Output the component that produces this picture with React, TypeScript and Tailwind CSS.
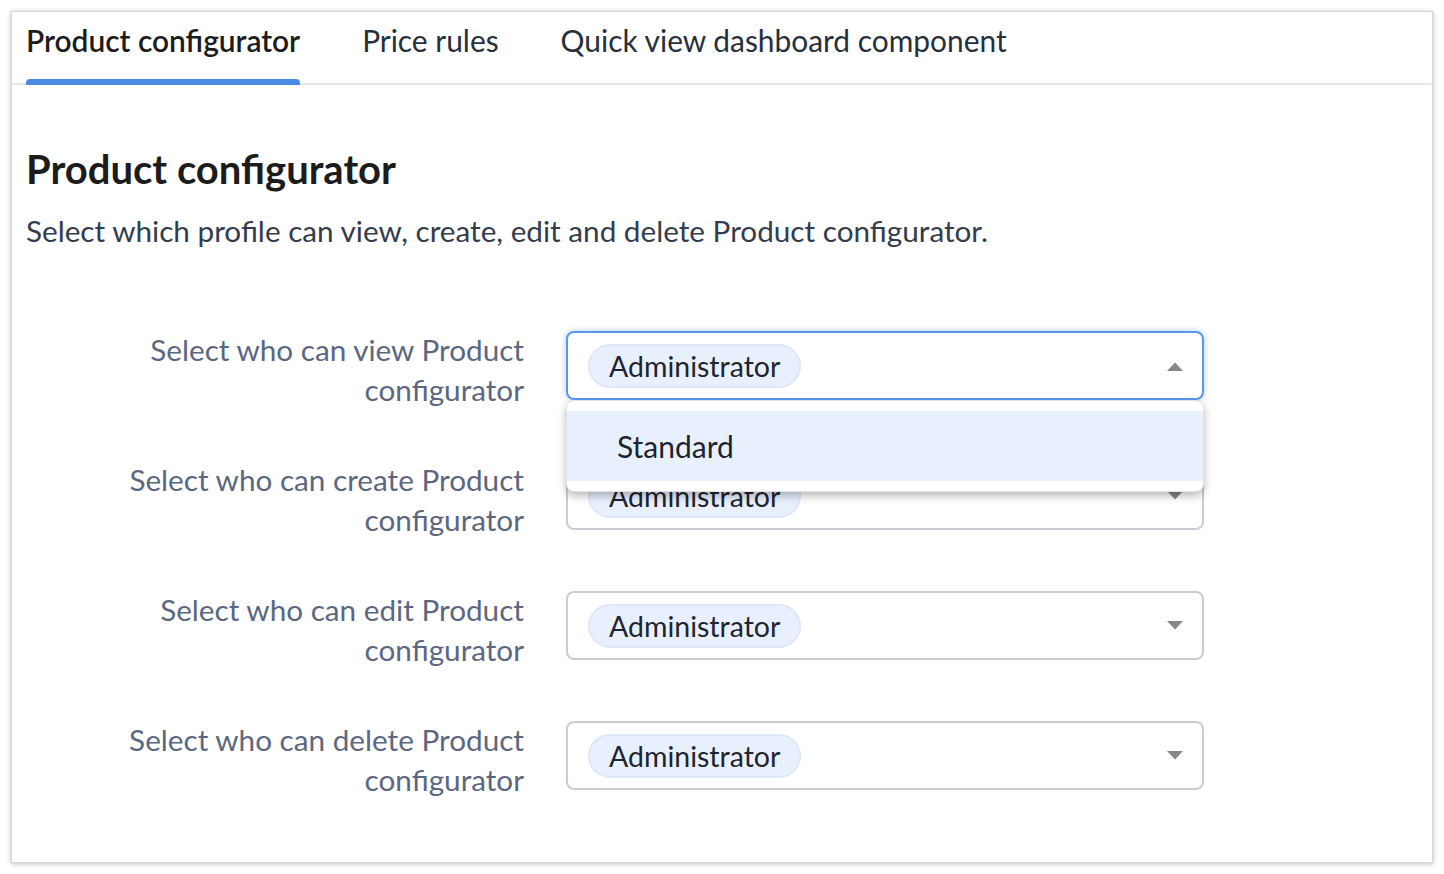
import { useState } from 'react';

const rows = [
  { label: ['Select who can view Product', 'configurator'], open: true },
  { label: ['Select who can create Product', 'configurator'], open: false },
  { label: ['Select who can edit Product', 'configurator'], open: false },
  { label: ['Select who can delete Product', 'configurator'], open: false },
];

const tabs = ['Product configurator', 'Price rules', 'Quick view dashboard component'];

function Caret({ up }: { up?: boolean }) {
  return (
    <svg width="18" height="10" viewBox="0 0 18 10" className="text-[#85878d]">
      {up ? (
        <path d="M1 10 L9 1.5 L17 10 Z" fill="currentColor" />
      ) : (
        <path d="M1 0 L9 8.5 L17 0 Z" fill="currentColor" />
      )}
    </svg>
  );
}

function Select({ open }: { open: boolean }) {
  return (
    <div className="relative mt-[1px] w-[638px]">
      <div
        className={`flex h-[69px] items-center justify-between rounded-[8px] border-2 bg-white pr-[18px] pl-[20px] ${
          open
            ? 'border-[#5b97ee] shadow-[0_0_6px_rgba(74,144,226,0.45)]'
            : 'border-[#c9ccd3]'
        }`}
      >
        <span className="rounded-full border-2 border-[#dde7f7] bg-[#e9f0fd] px-[19px] py-[2px] text-[28.5px] leading-[36px] text-[#1e2430]">
          Administrator
        </span>
        <Caret up={open} />
      </div>
      {open && (
        <div className="absolute top-[69px] right-0 left-0 z-10 rounded-[8px] border border-[#e2e2e2] bg-white py-[10px] shadow-[0_4px_9px_rgba(0,0,0,0.28)]">
          <div className="flex h-[70px] items-center bg-[#e9f0fd] pl-[50px] text-[30px] text-[#1e2430]">
            Standard
          </div>
        </div>
      )}
    </div>
  );
}

export default function App() {
  const [active, setActive] = useState(0);

  return (
    <div
      className="h-[874px] w-[1444px] bg-white p-[11px]"
      style={{ fontFamily: 'Lato, "Open Sans", sans-serif' }}
    >
      <div className="h-[852px] w-[1422px] border border-[#d6d6d6] bg-white shadow-[0_1px_5px_rgba(0,0,0,0.25)]">
        {/* Tabs */}
        <div className="flex h-[73px] gap-[62px] border-b-2 border-[#e3e6ea] px-[14px]">
          {tabs.map((t, i) => (
            <button
              key={t}
              type="button"
              onClick={() => setActive(i)}
              className="relative flex items-start pt-[8px] text-[29.9px] leading-[40px]"
            >
              <span className={i === active ? 'font-semibold text-[#1c1c1c]' : 'text-[#26303d]'}>
                {t}
              </span>
              {i === active && (
                <span className="absolute right-0 bottom-[-2px] left-0 h-[6px] rounded-t-[4px] bg-[#4a8be3]" />
              )}
            </button>
          ))}
        </div>

        {/* Body */}
        <div className="px-[14px] pt-[58px]">
          <h1 className="text-[40px] leading-[52px] font-bold text-[#1c1c1c]">
            Product configurator
          </h1>
          <p className="mt-[16px] text-[29.7px] leading-[40px] text-[#333c4c]">
            Select which profile can view, create, edit and delete Product configurator.
          </p>

          <div className="mt-[79px] flex flex-col gap-[50px]">
            {rows.map((r, i) => (
              <div key={i} className="flex items-start gap-[42px]">
                <div className="w-[498px] text-right text-[29.7px] leading-[40px] text-[#5b6780]">
                  <div>{r.label[0]}</div>
                  <div>{r.label[1]}</div>
                </div>
                <Select open={r.open} />
              </div>
            ))}
          </div>
        </div>
      </div>
    </div>
  );
}
